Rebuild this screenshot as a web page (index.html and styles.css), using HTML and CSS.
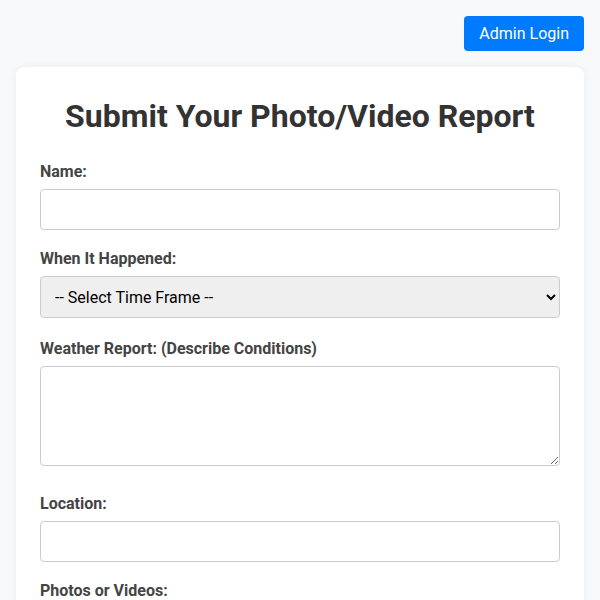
FILE: index.html
```html
<!DOCTYPE html>
<html lang="en">
<head>
<meta charset="utf-8">
<title>Submit Your Photo/Video Report</title>
<link rel="stylesheet" href="styles.css">
</head>
<body>
<div class="page">
  <header class="topbar">
    <button class="admin-btn" type="button">Admin Login</button>
  </header>
  <main class="card">
    <h2 class="title">Submit Your Photo/Video Report</h2>
    <form class="report-form">
      <label class="field-label" for="name">Name:</label>
      <input class="field" id="name" type="text">

      <label class="field-label" for="when">When It Happened:</label>
      <select class="field field-select" id="when">
        <option>-- Select Time Frame --</option>
      </select>

      <label class="field-label" for="weather">Weather Report: (Describe Conditions)</label>
      <textarea class="field field-area" id="weather"></textarea>

      <label class="field-label" for="location">Location:</label>
      <input class="field" id="location" type="text">

      <label class="field-label" for="media">Photos or Videos:</label>
      <input class="file" id="media" type="file" multiple>
    </form>
  </main>
</div>
</body>
</html>
```

FILE: styles.css
```css
html, body {
  margin: 0;
  padding: 0;
}

body {
  background: #f8f9fa;
  font-family: Roboto, "Liberation Sans", Arial, sans-serif;
  color: #333;
}

.page {
  padding: 16px;
}

.topbar {
  display: flex;
  justify-content: flex-end;
  margin-bottom: 16px;
}

.admin-btn {
  background: #007bff;
  color: #fff;
  border: none;
  border-radius: 4px;
  padding: 0 15px;
  font-family: Roboto, "Liberation Sans", Arial, sans-serif;
  font-size: 16px;
  line-height: normal;
  height: 35px;
  white-space: nowrap;
  cursor: pointer;
}

.card {
  background: #fff;
  border-radius: 8px;
  box-shadow: 0 0 10px rgba(0, 0, 0, 0.06);
  padding: 30px 24px 24px;
}

.title {
  margin: 0 0 27px;
  font-size: 32px;
  font-weight: 700;
  line-height: normal;
  text-align: center;
  color: #333;
}

.report-form {
  display: flex;
  flex-direction: column;
}

.field-label {
  display: block;
  font-weight: 700;
  font-size: 16px;
  line-height: normal;
  color: #444;
  margin-bottom: 8px;
}

.field {
  display: block;
  box-sizing: border-box;
  width: 100%;
  padding: 10px;
  border: 1px solid #ccc;
  border-radius: 4px;
  font-family: Roboto, "Liberation Sans", Arial, sans-serif;
  font-size: 16px;
  height: 41px;
  margin: 0 0 19px;
  background: #fff;
  color: #000;
}

.field-select {
  height: 42px;
  background-color: #efefef;
  padding: 0 10px;
  margin-bottom: 21px;
}

.field-area {
  height: 100px;
  margin-bottom: 28px;
  resize: vertical;
}

.file {
  font-family: Roboto, "Liberation Sans", Arial, sans-serif;
  font-size: 14px;
}
```
